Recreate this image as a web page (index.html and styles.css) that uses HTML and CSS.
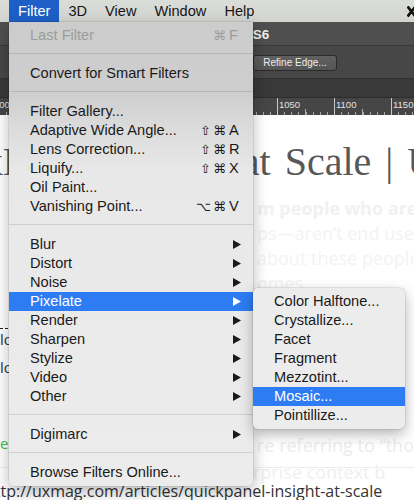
FILE: index.html
```html
<!DOCTYPE html>
<html lang="en">
<head>
<meta charset="utf-8">
<title>Filter menu</title>
<link rel="stylesheet" href="styles.css">
</head>
<body>
<div class="screen">
  <header class="menubar">
    <span class="mb-item active">Filter</span>
    <span class="mb-item">3D</span>
    <span class="mb-item">View</span>
    <span class="mb-item">Window</span>
    <span class="mb-item">Help</span>
    <svg class="mb-x" width="7" height="11" viewBox="0 0 7 11"><path d="M0.5 0.5L8.5 10.5M8.5 0.5L0.5 10.5" stroke="#111" stroke-width="2.8" fill="none"/></svg>
  </header>

  <div class="ps-title">CS6</div>
  <div class="ps-options"><span class="ps-btn">Refine Edge...</span></div>
  <div class="ps-tabs"></div>
  <div class="ruler">
    <span class="rcell">800</span>
    <span class="rcell">850</span>
    <span class="rcell">900</span>
    <span class="rcell">950</span>
    <span class="rcell">1000</span>
    <span class="rcell">1050</span>
    <span class="rcell">1100</span>
    <span class="rcell">1150</span>
  </div>

  <main class="page">
    <h1 class="title">QuickPanel: Insight at Scale | UX Magazine</h1>
    <div class="fade bold">m people who are</div>
    <div class="fade">ps—aren’t end users</div>
    <div class="fade">about these people</div>
    <div class="fade">omes.</div>
    <div class="dash"></div>
    <div class="frag">lo</div>
    <div class="frag frag2">lo</div>
    <div class="row-quote">
      <span class="green">e</span>
      <span class="faint">re referring to “tho</span>
    </div>
    <div class="faint faint-tight">rprise context b</div>
    <div class="url">http://uxmag.com/articles/quickpanel-insight-at-scale</div>
  </main>

  <nav class="menu main-menu">
    <div class="mi disabled"><span class="label">Last Filter</span><span class="sc"><span class="mods"><span>⌘</span></span><span class="key">F</span></span></div>
    <div class="sep"></div>
    <div class="mi"><span class="label">Convert for Smart Filters</span></div>
    <div class="sep"></div>
    <div class="mi"><span class="label">Filter Gallery...</span></div>
    <div class="mi"><span class="label">Adaptive Wide Angle...</span><span class="sc"><span class="mods"><span>⇧</span><span>⌘</span></span><span class="key">A</span></span></div>
    <div class="mi"><span class="label">Lens Correction...</span><span class="sc"><span class="mods"><span>⇧</span><span>⌘</span></span><span class="key">R</span></span></div>
    <div class="mi"><span class="label">Liquify...</span><span class="sc"><span class="mods"><span>⇧</span><span>⌘</span></span><span class="key">X</span></span></div>
    <div class="mi"><span class="label">Oil Paint...</span></div>
    <div class="mi"><span class="label">Vanishing Point...</span><span class="sc"><span class="mods"><span>⌥</span><span>⌘</span></span><span class="key">V</span></span></div>
    <div class="sep"></div>
    <div class="mi"><span class="label">Blur</span><svg class="arr" width="8" height="9" viewBox="0 0 8 9"><path d="M0 0L8 4.5L0 9Z"/></svg></div>
    <div class="mi"><span class="label">Distort</span><svg class="arr" width="8" height="9" viewBox="0 0 8 9"><path d="M0 0L8 4.5L0 9Z"/></svg></div>
    <div class="mi"><span class="label">Noise</span><svg class="arr" width="8" height="9" viewBox="0 0 8 9"><path d="M0 0L8 4.5L0 9Z"/></svg></div>
    <div class="mi hl"><span class="label">Pixelate</span><svg class="arr" width="8" height="9" viewBox="0 0 8 9"><path d="M0 0L8 4.5L0 9Z"/></svg></div>
    <div class="mi"><span class="label">Render</span><svg class="arr" width="8" height="9" viewBox="0 0 8 9"><path d="M0 0L8 4.5L0 9Z"/></svg></div>
    <div class="mi"><span class="label">Sharpen</span><svg class="arr" width="8" height="9" viewBox="0 0 8 9"><path d="M0 0L8 4.5L0 9Z"/></svg></div>
    <div class="mi"><span class="label">Stylize</span><svg class="arr" width="8" height="9" viewBox="0 0 8 9"><path d="M0 0L8 4.5L0 9Z"/></svg></div>
    <div class="mi"><span class="label">Video</span><svg class="arr" width="8" height="9" viewBox="0 0 8 9"><path d="M0 0L8 4.5L0 9Z"/></svg></div>
    <div class="mi"><span class="label">Other</span><svg class="arr" width="8" height="9" viewBox="0 0 8 9"><path d="M0 0L8 4.5L0 9Z"/></svg></div>
    <div class="sep"></div>
    <div class="mi"><span class="label">Digimarc</span><svg class="arr" width="8" height="9" viewBox="0 0 8 9"><path d="M0 0L8 4.5L0 9Z"/></svg></div>
    <div class="sep"></div>
    <div class="mi"><span class="label">Browse Filters Online...</span></div>
  </nav>

  <nav class="menu sub-menu">
    <div class="mi"><span class="label">Color Halftone...</span></div>
    <div class="mi"><span class="label">Crystallize...</span></div>
    <div class="mi"><span class="label">Facet</span></div>
    <div class="mi"><span class="label">Fragment</span></div>
    <div class="mi"><span class="label">Mezzotint...</span></div>
    <div class="mi hl"><span class="label">Mosaic...</span></div>
    <div class="mi"><span class="label">Pointillize...</span></div>
  </nav>
</div>
</body>
</html>
```

FILE: styles.css
```css
* { box-sizing: border-box; }
html, body { margin: 0; padding: 0; }
body {
  width: 414px;
  height: 500px;
  overflow: hidden;
  background: #fff;
  font-family: "Liberation Sans", Arial, sans-serif;
}
.screen {
  position: relative;
  width: 414px;
  height: 500px;
  overflow: hidden;
  display: flex;
  flex-direction: column;
}

/* ---------- OS menu bar ---------- */
.menubar {
  flex: none;
  width: 414px;
  height: 22px;
  display: flex;
  align-items: center;
  padding: 0 0 0 9px;
  background: linear-gradient(#dbddd9, #d2d4cf);
  font-size: 14.6px;
  color: #161616;
}
.mb-item { padding: 0 9px; line-height: 22px; height: 22px; white-space: nowrap; flex: none; }
.mb-item.active { background: #1d5fc6; color: #fff; }
.mb-x { display: block; flex: none; margin-left: auto; margin-top: 1px; }

/* ---------- Photoshop chrome ---------- */
.ps-title {
  flex: none;
  height: 24px;
  background: #4f4f4f;
  border-bottom: 1px solid #3a3a3a;
  padding-left: 243px;
  color: #f0f0f0;
  font-weight: bold;
  font-size: 13.5px;
  line-height: 25px;
  white-space: nowrap;
}
.ps-options {
  flex: none;
  height: 33px;
  background: #474747;
  border-bottom: 1px solid #323232;
  padding: 9px 0 0 253px;
  display: flex;
  align-items: flex-start;
}
.ps-btn {
  width: 84px;
  height: 16px;
  border: 1px solid #2a2a2a;
  border-radius: 3px;
  background: linear-gradient(#606060, #555);
  color: #eee;
  font-size: 10px;
  line-height: 14px;
  text-align: center;
}
.ps-tabs {
  flex: none;
  height: 19px;
  background: #393939;
  border-bottom: 1px solid #2c2c2c;
}
.ruler {
  flex: none;
  height: 17px;
  background: #464646;
  display: flex;
  overflow: hidden;
}
.rcell {
  flex: none;
  width: 57px;
  padding: 2px 0 0 2px;
  font-size: 9.5px;
  line-height: 10px;
  color: #e2e2e2;
  background:
    linear-gradient(#c9c9c9, #c9c9c9) 0 0 / 1px 100% no-repeat,
    linear-gradient(#b0b0b0, #b0b0b0) 28px 100% / 1px 6px no-repeat,
    repeating-linear-gradient(90deg, #a8a8a8 0 1px, transparent 1px 7.125px) 0 100% / 100% 3px no-repeat;
}
.rcell:first-child { margin-left: -8px; }

/* ---------- web page underneath ---------- */
.page {
  flex: 1;
  background: #fff;
  overflow: hidden;
}
.title {
  margin: 22.5px 0 0 -95px;
  font-family: "Liberation Serif", "Times New Roman", serif;
  font-weight: normal;
  font-size: 40px;
  line-height: 48px;
  word-spacing: 4px;
  color: #585858;
  white-space: nowrap;
}
.fade {
  font-family: "Open Sans", sans-serif;
  font-size: 18px;
  line-height: 25px;
  color: #f3f3f3;
  padding-left: 257px;
  white-space: nowrap;
}
.fade.bold { margin-top: 10px; font-weight: 700; color: #f1f1f1; }
.dash {
  margin-top: 32px;
  width: 240px;
  border-top: 1px dashed #222;
}
.frag {
  font-family: "Open Sans", sans-serif;
  font-size: 15px;
  line-height: 20px;
  color: #333;
  white-space: nowrap;
}
.frag2 { margin-top: 8px; }
.row-quote {
  margin-top: 56px;
  height: 35px;
  display: flex;
  align-items: flex-start;
  border-bottom: 1px solid #ededed;
}
.green {
  flex: none;
  width: 257px;
  font-family: "Open Sans", sans-serif;
  font-size: 15px;
  line-height: 20px;
  color: #45c04e;
}
.faint {
  font-family: "Open Sans", sans-serif;
  font-size: 18px;
  line-height: 25px;
  color: #ececec;
  white-space: nowrap;
}
.faint-tight { line-height: 8px; padding-left: 253px; color: #f0f0f0; }
.url {
  margin: 5.5px 0 0 -15px;
  font-family: "Open Sans", sans-serif;
  font-size: 16px;
  line-height: 20px;
  color: #333;
  white-space: nowrap;
}

/* ---------- menus ---------- */
.menu {
  position: absolute;
  padding: 4px 0;
  font-size: 14.6px;
  color: #1a1a1a;
  white-space: nowrap;
}
.main-menu {
  left: 9px;
  top: 22px;
  width: 244px;
  border-radius: 0 0 6px 6px;
  background: linear-gradient(#cbcccb 0, #cdcecd 72px, #dcdcdc 108px, #e8e8e8 150px, #ececec 100%);
  box-shadow: 0 6px 16px rgba(0,0,0,0.28), 0 0 0 0.5px rgba(0,0,0,0.15);
  z-index: 2;
}
.sub-menu {
  left: 253px;
  top: 288px;
  width: 152px;
  border-radius: 5px;
  background: #ececec;
  box-shadow: 0 5px 14px rgba(0,0,0,0.3), 0 0 0 0.5px rgba(0,0,0,0.15);
  z-index: 3;
}
.mi {
  display: flex;
  align-items: center;
  height: 19px;
  padding: 0 12px 1px 21px;
  line-height: 17px;
}
.mi .label { flex: 1; }
.mi.disabled { color: #9c9c9c; }
.mi.hl { background: #2d7cf4; color: #fff; }
.sc { display: flex; align-items: center; }
.mods {
  display: flex;
  gap: 2px;
  font-family: "DejaVu Sans", sans-serif;
  font-size: 13px;
}
.key { width: 12px; margin-left: 3px; }
.arr { fill: currentColor; margin-top: 1px; flex: none; }
.sep {
  height: 19px;
  padding-top: 8px;
}
.sep::after {
  content: "";
  display: block;
  height: 1px;
  background: rgba(0,0,0,0.11);
}
```
